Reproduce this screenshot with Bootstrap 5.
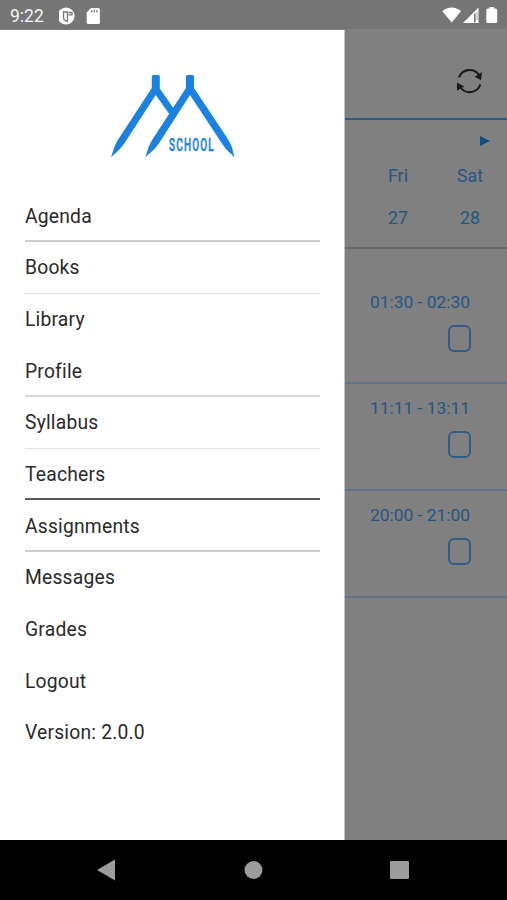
<!DOCTYPE html>
<html lang="en">
<head>
<meta charset="utf-8">
<meta name="viewport" content="width=device-width, initial-scale=1">
<title>School</title>
<link rel="stylesheet" href="https://cdn.jsdelivr.net/npm/bootstrap@5.3.0/dist/css/bootstrap.min.css">
<style>
  body { font-family: Roboto, "Liberation Sans", sans-serif; background: #808080; height: 900px; overflow: hidden; }
  svg { display: block; flex: none; }
  .status { height: 30px; background: #757575; color: #f4f4f4; font-size: 17.5px; padding-left: 10px; box-shadow: inset 0 -1px #7e7e7e; }
  .status span { padding-top: 2px; }
  .main { height: 810px; }
  .drawer { width: 345px; background: #fff; border-right: 1px solid #c4c4c4; padding: 0 24px 0 25px; }
  .logo-box { height: 160.4px; padding: 40px 0 0 80px; }
  .item { height: 51.65px; font-size: 19.3px; letter-spacing: .2px; color: #2a2a2a; padding-top: 2px; }
  .rule-mid { box-shadow: inset 0 -2px #cdcdcd; }
  .rule-soft { box-shadow: inset 0 -2px #dadada; }
  .rule-thin { box-shadow: inset 0 -1px #e2e2e2; }
  .rule-dark { box-shadow: inset 0 -2px #5a5a5a; }
  .agenda { background: #808080; color: #245684; font-size: 17.4px; }
  .topbar { height: 90px; border-bottom: 2px solid #2a5c85; padding: 14px 23px 0 0; }
  .week { height: 128.5px; border-bottom: 2px solid #696969; }
  .next { height: 41px; padding-right: 17px; }
  .day { width: 72px; font-size: 17.8px; line-height: 42px; margin-top: -6px; margin-right: 1px; margin-left: -1px; }
  .slots { padding-top: 29px; }
  .slot { height: 106.8px; padding: 13px 37px 0 0; border-bottom: 2px solid #647488; }
  .slot span { line-height: 22px; }
  .tick { width: 23px; height: 27px; border: 2px solid #305d86; border-radius: 6px; margin-top: 12px; margin-right: -1px; }
  .keys { height: 60px; background: #000; }
</style>
</head>
<body>
<header class="status d-flex align-items-center">
  <span>9:22</span>
  <svg width="48" height="20" viewBox="0 0 48 20" style="margin:1px 0 0 15px">
    <circle cx="7" cy="10" r="8.600" fill="#fff"/>
    <path d="M4.500 6h4v9q-4 0-4-4zM9.500 6.500h3.500v2.300H9.500" fill="none" stroke="#777" stroke-width="1.300"/>
    <path d="M32 2h7.400a1.500 1.500 0 0 1 1.500 1.500v13a1.500 1.500 0 0 1-1.500 1.500H29.200a1.500 1.500 0 0 1-1.500-1.500V6.500z" fill="#fff"/>
    <path d="M32.700 4v2.500M35.300 4v2.500M37.900 4v2.500" stroke="#777" stroke-width="1.200"/>
  </svg>
  <svg width="58" height="20" viewBox="0 0 58 20" class="ms-auto" style="margin-right:7px">
    <path d="M.3 6.200C6 1.300 13.500 1.300 19 6.200L9.700 17.600z" fill="#fff"/>
    <path d="M36.500 2.500v15.500H21z" fill="#fff"/>
    <path d="M32.800 8.500v9" stroke="#777" stroke-width="1.600"/>
    <path d="M35 7v8" stroke="#aaa" stroke-width="1"/>
    <path d="M47.500 3.500V2h4.500v1.500h1.700a1.500 1.500 0 0 1 1.500 1.500v11.500a1.500 1.500 0 0 1-1.500 1.500h-7.900a1.500 1.500 0 0 1-1.500-1.500V5a1.500 1.500 0 0 1 1.500-1.500z" fill="#fff"/>
  </svg>
</header>

<div class="main d-flex">
  <nav class="drawer flex-shrink-0">
    <div class="logo-box">
      <svg width="140" height="95" viewBox="105 70 140 95">
        <g fill="#1b82e2">
          <path d="M151.800 76.500a1.500 1.500 0 0 1 1.500-1.500h5a1.500 1.500 0 0 1 1.500 1.500v12L176 112l-4.200 5.500L155.700 95 124 144l-4.500 5.500-8.500 7.700 3.500-10.700 3-6L151.800 88z"/>
          <path d="M186 76.500a1.500 1.500 0 0 1 1.500-1.500h5a1.500 1.500 0 0 1 1.500 1.500V88l34.500 52 3 6 3 11.200-8.200-7.700-4-5.500L190 95l-31.500 49-4.500 5.500-8.700 7.700 3.500-10.700 3-6L186 88z"/>
          <text transform="translate(169 150.500) scale(.54 1)" font-family="Roboto, sans-serif" font-weight="500" font-size="18.500" letter-spacing="2.200" stroke="#1b82e2" stroke-width=".5">SCHOOL</text>
        </g>
      </svg>
    </div>
    <div class="item d-flex align-items-center rule-mid">Agenda</div>
    <div class="item d-flex align-items-center rule-thin">Books</div>
    <div class="item d-flex align-items-center">Library</div>
    <div class="item d-flex align-items-center rule-soft">Profile</div>
    <div class="item d-flex align-items-center rule-thin">Syllabus</div>
    <div class="item d-flex align-items-center rule-dark">Teachers</div>
    <div class="item d-flex align-items-center rule-mid">Assignments</div>
    <div class="item d-flex align-items-center">Messages</div>
    <div class="item d-flex align-items-center">Grades</div>
    <div class="item d-flex align-items-center">Logout</div>
    <div class="item d-flex align-items-center">Version: 2.0.0</div>
  </nav>

  <main class="agenda flex-grow-1">
    <div class="topbar d-flex align-items-center justify-content-end">
      <svg width="28" height="28" viewBox="0 0 28 28">
        <path d="M3 10.500A11.300 11.300 0 0 1 23 8M24.300 17.500A11.300 11.300 0 0 1 4.500 20.500" fill="none" stroke="#1b1b1b" stroke-width="2.100"/>
        <path d="M26 5L25 13.200L18.700 9.700zM1 23.800V15.500L8.200 19.500z" fill="#1b1b1b"/>
      </svg>
    </div>
    <div class="week">
      <div class="next d-flex align-items-center justify-content-end">
        <svg width="10" height="10" viewBox="0 0 10 10"><path d="M0 0v10l10-5z" fill="#0f4c81"/></svg>
      </div>
      <div class="d-flex justify-content-end text-center">
        <div class="day"><div>Fri</div><div>27</div></div>
        <div class="day"><div>Sat</div><div>28</div></div>
      </div>
    </div>
    <div class="slots">
      <div class="slot d-flex flex-column align-items-end"><span>01:30 - 02:30</span><div class="tick"></div></div>
      <div class="slot d-flex flex-column align-items-end"><span>11:11 - 13:11</span><div class="tick"></div></div>
      <div class="slot d-flex flex-column align-items-end"><span>20:00 - 21:00</span><div class="tick"></div></div>
    </div>
  </main>
</div>

<footer class="keys">
  <svg width="507" height="60" viewBox="0 840 507 60" fill="#9c9c9c">
    <path d="M97 870l18-10.500v21z"/>
    <circle cx="253.500" cy="870" r="9"/>
    <rect x="390" y="861" width="19" height="18" rx="1"/>
  </svg>
</footer>
<script src="https://cdn.jsdelivr.net/npm/bootstrap@5.3.0/dist/js/bootstrap.bundle.min.js"></script>
</body>
</html>
